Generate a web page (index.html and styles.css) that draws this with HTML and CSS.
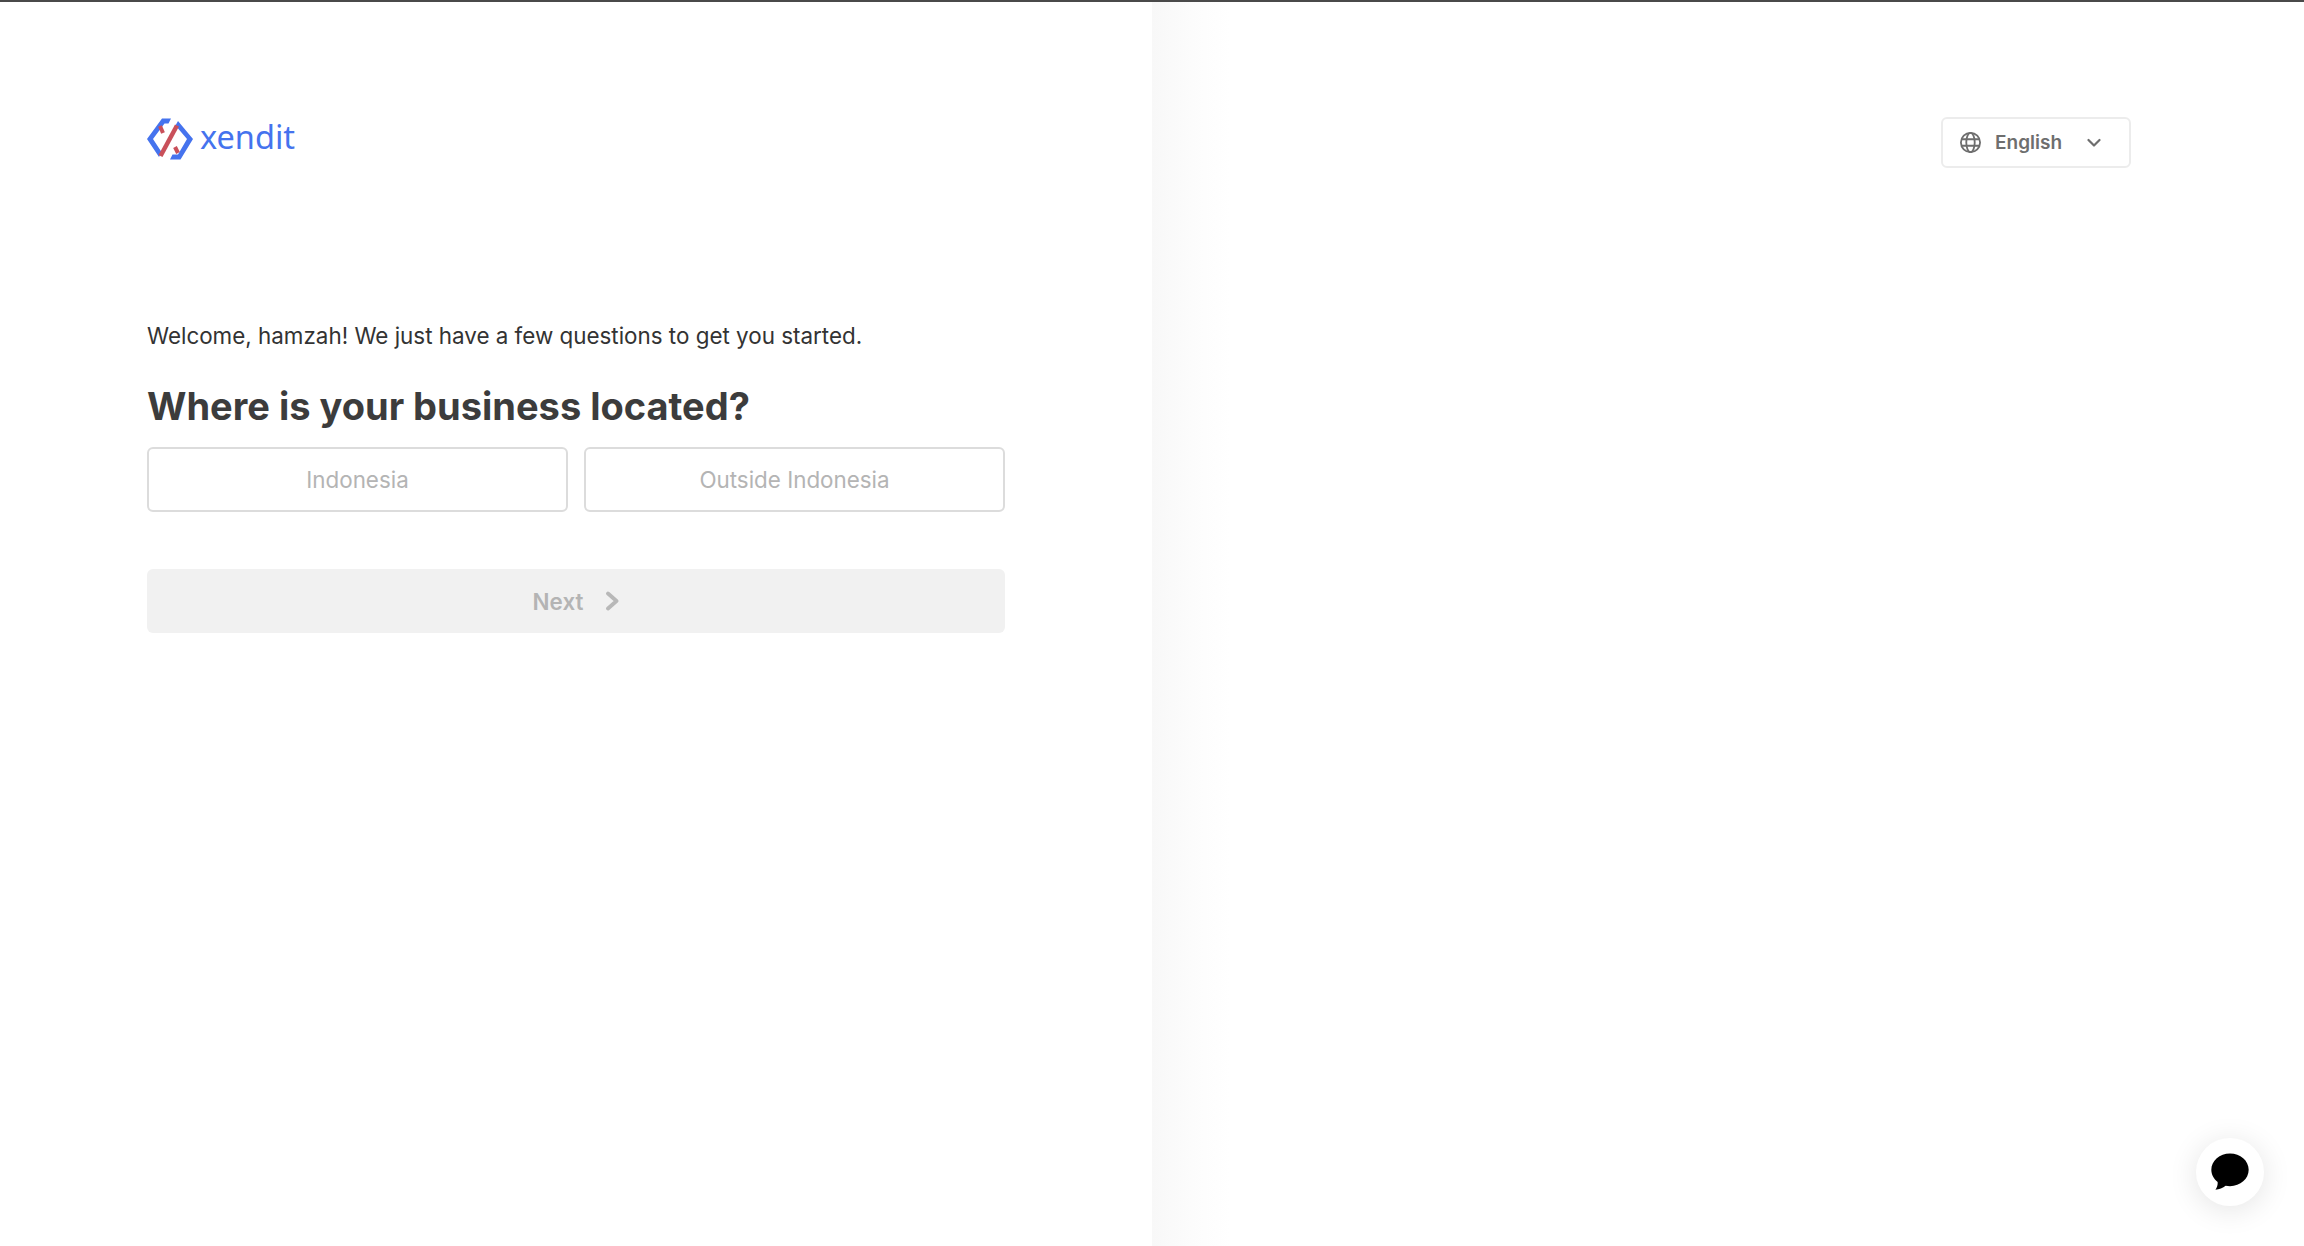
FILE: index.html
```html
<!DOCTYPE html>
<html lang="en">
<head>
<meta charset="utf-8">
<title>Xendit</title>
<link rel="stylesheet" href="styles.css">
</head>
<body>
<div class="topline"></div>
<main class="page">
  <section class="left">
    <div class="logo">
      <svg class="logo-mark" viewBox="0 0 46 44" width="46" height="44" fill="none">
        <path d="M15 1.500H24L21.500 6.500H17.500L6 22L14.500 35L12 40L0 22Z" fill="#4573ee"/>
        <path d="M31 4L46 22L33.500 42.500H23L25.500 37.500H31L40 22L28.500 8.500Z" fill="#4573ee"/>
        <path d="M30 8.500L13.500 39" stroke="#c9505a" stroke-width="4.500"/>
        <path d="M13 9L16 16" stroke="#c9505a" stroke-width="4"/>
        <path d="M28 30L31 36" stroke="#c9505a" stroke-width="4"/>
      </svg>
      <span class="logo-text">xendit</span>
    </div>
    <p class="welcome">Welcome, hamzah! We just have a few questions to get you started.</p>
    <h1 class="title">Where is your business located?</h1>
    <div class="options">
      <button class="option">Indonesia</button>
      <button class="option">Outside Indonesia</button>
    </div>
    <button class="next">
      <span>Next</span>
      <svg viewBox="0 0 14 20" width="14" height="20" fill="none"><path d="M3 2.500L11.500 10L3 17.500" stroke="#b8b8b8" stroke-width="3.800" stroke-linecap="round" stroke-linejoin="round"/></svg>
    </button>
  </section>
  <section class="right">
    <button class="lang">
      <svg viewBox="0 0 24 24" width="23" height="23" fill="none" stroke="#6e6e6e" stroke-width="1.900">
        <circle cx="12" cy="12" r="10"/>
        <ellipse cx="12" cy="12" rx="4.400" ry="10"/>
        <path d="M2.600 8.600H21.400M2.600 15.400H21.400"/>
      </svg>
      <span class="lang-name">English</span>
      <svg class="chev" viewBox="0 0 14 10" width="14" height="10" fill="none"><path d="M1.500 2L7 7.500L12.500 2" stroke="#6e6e6e" stroke-width="2.200" stroke-linecap="round" stroke-linejoin="round"/></svg>
    </button>
  </section>
</main>
<button class="chat" aria-label="Chat">
  <svg viewBox="0 0 36 36" width="38" height="38"><path d="M18 .5C8.200.5.300 7.400.300 15.900c0 4.600 2.300 8.700 6 11.500.3 2.400-.6 5.200-2.100 7.500 3.400-.3 7.200-2 9.700-3.900 1.300.3 2.700.4 4.100.4 9.800 0 17.700-6.900 17.700-15.500S27.800.5 18 .5Z" fill="#000"/></svg>
</button>
</body>
</html>
```
FILE: styles.css
```css
* { box-sizing: border-box; }
html, body { margin: 0; height: 100%; background: #fff; overflow: hidden; }
body { font-family: Inter, "Liberation Sans", sans-serif; color: #3a3a3a; display: flex; flex-direction: column; }
button { font-family: inherit; cursor: pointer; }

.topline { height: 2px; background: #4a4a4a; flex: none; }
.page { flex: 1; display: flex; min-height: 0; }

.left { width: 1152px; padding: 115px 147px 0; display: flex; flex-direction: column; }
.right { flex: 1; padding: 115px 173px 0 0; display: flex; justify-content: flex-end; align-items: flex-start;
  background: linear-gradient(to right, #f8f8f8 0, #fcfcfc 40px, #fff 78px); }

.logo { display: flex; align-items: center; gap: 7px; height: 44px; }
.logo-mark { flex: none; }
.logo-text { font-family: "Noto Sans", sans-serif; font-size: 32.500px; line-height: 44px; color: #4573ee; position: relative; top: -2px; }

.welcome { margin: 159px 0 0; font-size: 22.400px; line-height: 32px; color: #333; }
.title { margin: 29px 0 0; font-size: 38px; line-height: 50px; font-weight: 700; color: #3c3c3c; }

.options { display: flex; gap: 16px; margin-top: 16px; }
.option { flex: 1; height: 65px; background: #fff; border: 2px solid #dcdcdc; border-radius: 6px; font-size: 22.400px; color: #b4b4b4; padding: 0; }

.next { margin-top: 57px; height: 64px; border: 0; border-radius: 6px; background: #f1f1f1; color: #b4b4b4; font-size: 22.400px; font-weight: 600; display: flex; align-items: center; justify-content: center; gap: 22px; padding: 0; }

.lang { width: 190px; height: 51px; background: #fff; border: 2px solid #ececec; border-radius: 6px; display: flex; align-items: center; padding: 0 0 0 16px; color: #6e6e6e; font-size: 19px; font-weight: 600; }
.lang-name { margin-left: 13px; }
.chev { margin-left: 25px; }

.chat { position: fixed; left: 2196px; top: 1138px; width: 68px; height: 68px; border-radius: 50%; border: 0; padding: 0; background: #fff; display: flex; align-items: center; justify-content: center; box-shadow: 0 4px 30px rgba(0,0,0,.11); }
```
